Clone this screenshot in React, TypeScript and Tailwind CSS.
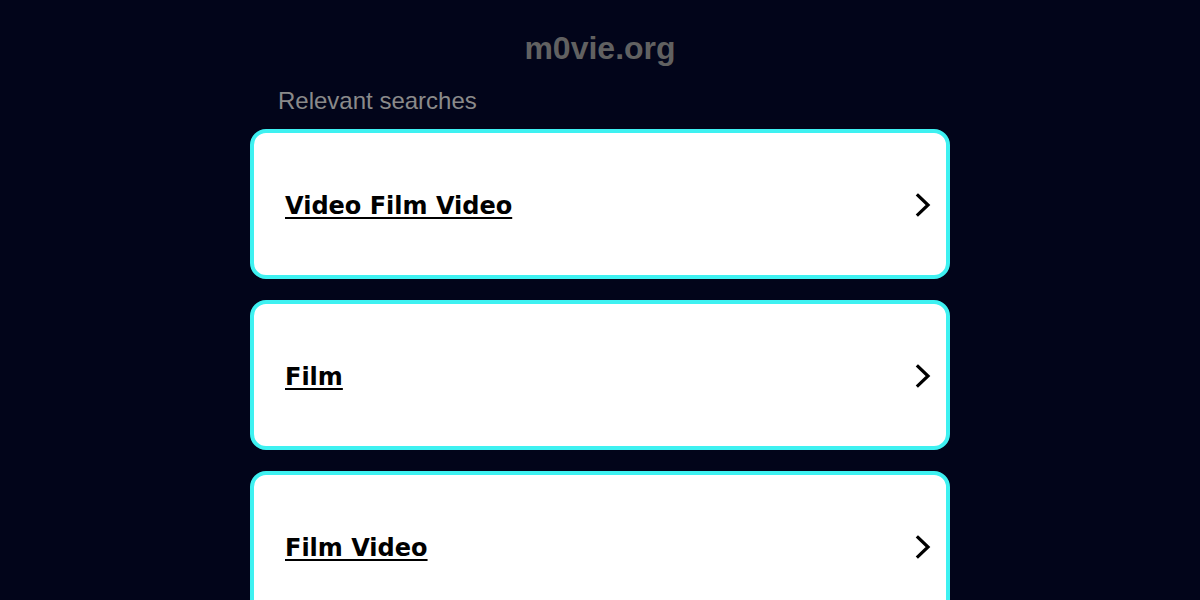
const searches = ["Video Film Video", "Film", "Film Video", "Video Film"];

function Chevron() {
  return (
    <svg width="16" height="24" viewBox="0 0 16 24" fill="none" aria-hidden="true">
      <polyline
        points="3,2.5 13,12 3,21.5"
        stroke="#000"
        strokeWidth="3.2"
        strokeLinecap="square"
        strokeLinejoin="miter"
      />
    </svg>
  );
}

export default function App() {
  return (
    <div className="min-h-screen bg-[#02051a] font-['Liberation_Sans',Arial,sans-serif]">
      <div className="mx-auto w-[700px] pt-[30px]">
        <h1 className="text-center text-[32px] font-bold leading-[37px] text-[#616161]">
          m0vie.org
        </h1>
        <h2 className="mt-[20px] pl-[28px] text-[24px] leading-[28px] text-[#8a8a8a]">
          Relevant searches
        </h2>
        <ul className="mt-[14px] flex flex-col gap-[21px]">
          {searches.map((s) => (
            <li key={s}>
              <a
                href="#"
                className="flex h-[150px] items-center justify-between rounded-[16px] border-4 border-[#3ef1f1] bg-white pl-[31px] pr-[15px]"
              >
                <span className="pt-[4px] font-['DejaVu_Sans',Verdana,sans-serif] text-[24px] font-bold text-black underline decoration-2 underline-offset-[3px]">
                  {s}
                </span>
                <span className="pt-[2px]">
                  <Chevron />
                </span>
              </a>
            </li>
          ))}
        </ul>
      </div>
    </div>
  );
}
